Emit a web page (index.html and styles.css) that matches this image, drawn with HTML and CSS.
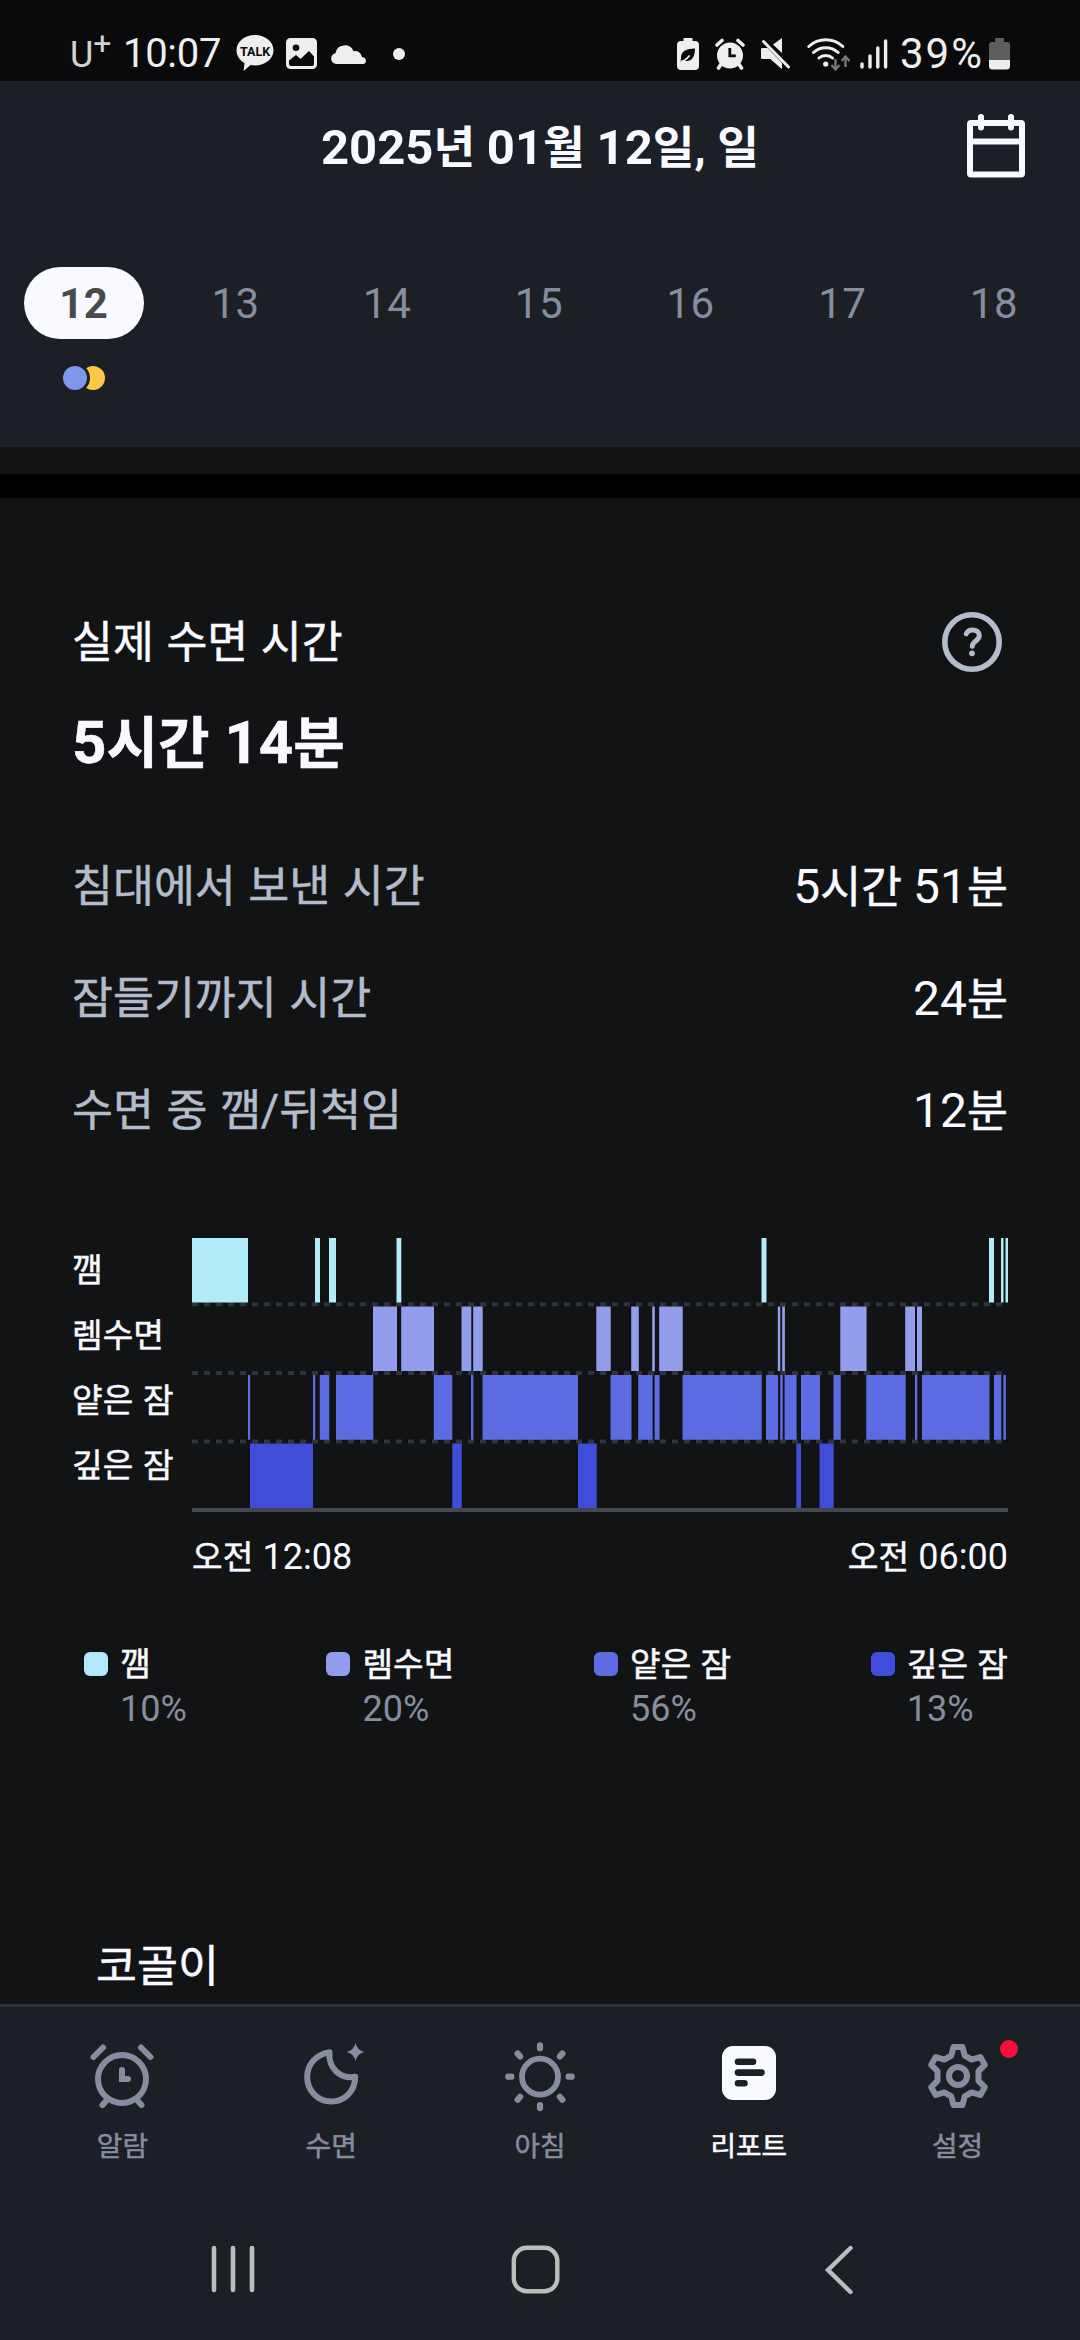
FILE: index.html
```html
<!DOCTYPE html>
<html lang="ko">
<head>
<meta charset="utf-8">
<title>수면 리포트</title>
<link rel="stylesheet" href="styles.css">
</head>
<body>
<div class="status">
  <div class="status-left">
    <span class="carrier">U<span class="plus">+</span></span>
    <span class="clock">10:07</span>
    <svg class="s-talk" width="38" height="37" viewBox="0 0 38 37"><path fill="#eee" d="M19 0C8.500 0 .5 6.800.5 15.300c0 5.500 3.300 10.200 8 12.900L7.600 36l6.900-5.900c1.500.3 3 .4 4.500.4 10.500 0 18.500-6.800 18.500-15.200S29.500 0 19 0z"/><text x="19" y="20.500" text-anchor="middle" class="talk">TALK</text></svg>
    <svg class="s-img" width="31" height="31" viewBox="0 0 31 31"><path fill="#eee" fill-rule="evenodd" d="M4.500 0h22A4.500 4.500 0 0 1 31 4.500v22a4.500 4.500 0 0 1-4.500 4.500h-22A4.500 4.500 0 0 1 0 26.500v-22A4.500 4.500 0 0 1 4.500 0zM10 6.500a3.300 3.300 0 1 0 0 6.600 3.300 3.300 0 0 0 0-6.600zM3 22.500V26q0 2 2 2h21q2 0 2-2v-7.500L23 13l-8.500 8-4.500-4z"/></svg>
    <svg class="s-cloud" width="37" height="20" viewBox="0 0 37 20"><path fill="#eee" d="M6 20a5.500 5.500 0 0 1-.6-10.800A9.500 9.500 0 0 1 23.500 7.200a7 7 0 0 1 8.500 6A3.500 3.500 0 0 1 33.500 20z"/></svg>
    <span class="s-dot"></span>
  </div>
  <div class="status-right">
    <svg width="22" height="32" viewBox="0 0 22 32"><path fill="#eee" d="M6.500 0h9v3H18a4 4 0 0 1 4 4v21a4 4 0 0 1-4 4H4a4 4 0 0 1-4-4V7a4 4 0 0 1 4-4h2.500z"/><path fill="#0a0a0c" d="M4 20c0-6 4-9.500 14-9.500 0 8-3 12.500-8 12.500-1.500 0-2.500-.3-3.500-1L3.500 24z"/><path d="M3.500 23.500q5-.5 9-6" stroke="#eee" stroke-width="1.600" fill="none"/></svg>
    <svg width="30" height="32" viewBox="0 0 30 32"><circle cx="15" cy="17.500" r="13" fill="#eee"/><path d="M2 7l5-4.500M28 7l-5-4.500M5.500 27l-2 3M24.500 27l2 3" stroke="#eee" stroke-width="3.600" stroke-linecap="round"/><path d="M14.800 10v7.800h6" fill="none" stroke="#0a0a0c" stroke-width="2.800"/></svg>
    <svg width="30" height="31" viewBox="0 0 30 31"><path fill="#eee" d="M0 12q0-2 2-2h5L21 24v7L9.500 21H2q-2 0-2-2zM12 6.500L21 0v15z"/><path d="M2.500 3.500L27 29" stroke="#0a0a0c" stroke-width="6"/><path fill="#eee" d="M0 12q0-2 2-2h4.500L21 25v6L9.500 21H2q-2 0-2-2z"/><path d="M2.500 3.500L27.500 29" stroke="#eee" stroke-width="3" stroke-linecap="round"/></svg>
    <svg width="43" height="34" viewBox="0 0 43 34"><g fill="none" stroke="#eee" stroke-width="3" stroke-linecap="round"><path d="M1.800 9.500a25 25 0 0 1 34 0M6.500 15.500a18 18 0 0 1 24.600 0M12 21a10 10 0 0 1 13.500 0"/></g><circle cx="18.700" cy="27" r="2.600" fill="#eee"/><path d="M28.500 22v10m-4-4l4 4.500 4-4.500M38.500 30V20m-4 4l4-4.500 4 4.500" fill="none" stroke="#777" stroke-width="2.400"/></svg>
    <svg width="28" height="30" viewBox="0 0 28 30"><path d="M2 25v3M10 17v11M17.800 9v19M25.600 2v26" stroke="#eee" stroke-width="3.400" stroke-linecap="round"/></svg>
    <span class="pct">39%</span>
    <svg width="21" height="32" viewBox="0 0 21 32"><path fill="#5e5e60" d="M6 0h9v4h3a3 3 0 0 1 3 3v15H0V7a3 3 0 0 1 3-3h3z"/><path fill="#eee" d="M0 22h21v6a3.500 3.500 0 0 1-3.500 3.500h-14A3.500 3.500 0 0 1 0 28z"/></svg>
  </div>
</div>

<header class="header">
  <div class="title-row">
    <span></span>
    <h1><b>2025</b>년 <b>01</b>월 <b>12</b>일, 일</h1>
    <svg class="calendar" width="58" height="64" viewBox="0 0 58 64" fill="none" stroke="#f8faff" stroke-width="6"><rect x="3" y="9" width="52" height="51.500" rx="1"/><path d="M3 27.500h52"/><path d="M14 3v10.500M44 3v10.500" stroke-linecap="round"/></svg>
  </div>
  <nav class="days">
    <div class="day selected"><span>12</span><i class="marks"><i class="sun-mark"></i><i class="moon-mark"></i></i></div>
    <div class="day"><span>13</span></div>
    <div class="day"><span>14</span></div>
    <div class="day"><span>15</span></div>
    <div class="day"><span>16</span></div>
    <div class="day"><span>17</span></div>
    <div class="day"><span>18</span></div>
  </nav>
</header>
<div class="divider"></div>

<main class="report">
  <div class="sleep-head">
    <h2>실제 수면 시간</h2>
    <svg width="60" height="60" viewBox="0 0 60 60" fill="none" stroke="#b4bbca"><circle cx="30" cy="30" r="27.200" stroke-width="5.600"/><path d="M24.300 21.800Q26 18 30.300 18c4.500 0 7 2.200 7 5.600 0 5.400-7 5.400-7 10.600" stroke-width="5" stroke-linecap="round"/><circle cx="30" cy="41.300" r="2.900" fill="#b4bbca" stroke="none"/></svg>
  </div>
  <p class="total"><b>5</b>시간 <b>14</b>분</p>
  <dl class="facts">
    <div><dt>침대에서 보낸 시간</dt><dd><b>5</b>시간 <b>51</b>분</dd></div>
    <div><dt>잠들기까지 시간</dt><dd><b>24</b>분</dd></div>
    <div><dt>수면 중 깸/뒤척임</dt><dd><b>12</b>분</dd></div>
  </dl>

  <section class="chart">
    <ul class="levels"><li>깸</li><li>렘수면</li><li>얕은 잠</li><li>깊은 잠</li></ul>
    <div class="plot">
      <svg width="816" height="274" viewBox="192 1238 816 274">
        <g stroke="#2f333c" stroke-width="4" stroke-dasharray="6 6"><path d="M192 1304.300h816M192 1373h816M192 1441.500h816"/></g>
        <path stroke="#444752" stroke-width="4" d="M192 1510h816"/>
        <path fill="#b2ecf8" d="M192 1238h56v64.500h-56zM315 1238h5v64.500h-5zM329 1238h7v64.500h-7zM396.500 1238h4.800v64.500h-4.800zM761.500 1238h5v64.500h-5zM989 1238h5v64.500h-5zM1001 1238h2.500v64.500h-2.500zM1005.500 1238h2.500v64.500h-2.500z"/>
        <path fill="#929dec" d="M373 1306.500h24v64.500h-24zM401.200 1306.500h32.800v64.500h-32.800zM461.500 1306.500h9.800v64.500h-9.800zM473.200 1306.500h9.500v64.500h-9.500zM596.300 1306.500h14.400v64.500h-14.400zM631.200 1306.500h7.600v64.500h-7.600zM652.200 1306.500h2.600v64.500h-2.600zM659.200 1306.500h23.500v64.500h-23.500zM777.800 1306.500h2.500v64.500h-2.500zM782.200 1306.500h2.700v64.500h-2.700zM840.300 1306.500h26.300v64.500h-26.300zM905.200 1306.500h9.800v64.500h-9.800zM917 1306.500h5v64.500h-5z"/>
        <path fill="#5d6ce2" d="M248 1375h2.200v64.700h-2.200zM313 1375h2.200v64.700h-2.200zM319.800 1375h9.400v64.700h-9.400zM336 1375h37.300v64.700h-37.300zM433.800 1375h18.500v64.700h-18.500zM471 1375h2.400v64.700h-2.400zM482.500 1375h95.500v64.700h-95.500zM610.500 1375h21v64.700h-21zM638.200 1375h14.400v64.700h-14.400zM654.600 1375h5v64.700h-5zM682.500 1375h79.200v64.700h-79.200zM766 1375h12v64.700h-12zM780.200 1375h2.500v64.700h-2.500zM784.600 1375h12v64.700h-12zM801 1375h19v64.700h-19zM833.500 1375h7.200v64.700h-7.200zM866.200 1375h39.500v64.700h-39.500zM915 1375h2.300v64.700h-2.300zM922 1375h67.500v64.700h-67.500zM994 1375h7.300v64.700h-7.300zM1003.400 1375h2.500v64.700h-2.500z"/>
        <path fill="#3f4dd8" d="M250 1443.500h63v64.500h-63zM452.300 1443.500h9.500v64.500h-9.500zM578 1443.500h18.700v64.500h-18.700zM796.300 1443.500h4.700v64.500h-4.700zM819.500 1443.500h14.200v64.500h-14.200z"/>
      </svg>
      <div class="times"><span>오전 <b>12:08</b></span><span>오전 <b>06:00</b></span></div>
    </div>
  </section>

  <ul class="legend">
    <li><i class="swatch awake"></i><div>깸<b>10%</b></div></li>
    <li><i class="swatch rem"></i><div>렘수면<b>20%</b></div></li>
    <li><i class="swatch light"></i><div>얕은 잠<b>56%</b></div></li>
    <li><i class="swatch deep"></i><div>깊은 잠<b>13%</b></div></li>
  </ul>
  <h3 class="snore">코골이</h3>
</main>

<nav class="tabs">
  <div class="tab"><svg viewBox="0 0 72 72" fill="none" stroke="#868d9e" stroke-width="6" stroke-linecap="round"><circle cx="36" cy="39" r="24"/><path d="M36 30v9h6M7.500 17l9.500-9.500M64.500 17L55 7.500M21 60l-4.500 5M51 60l4.500 5"/></svg>알람</div>
  <div class="tab"><svg viewBox="-3 0 72 72" fill="none" stroke="#868d9e" stroke-width="6" stroke-linejoin="round"><path d="M31.500 12.300C18 14.500 9.200 24.500 9.200 37c0 13.600 10.600 24.500 24 24.500 13.200 0 24-10.200 24-24.700C43 39 30 29 31.500 12.300z"/><path stroke="none" fill="#868d9e" d="M57.500 3q1.700 7.300 8.800 9-7.100 1.700-8.800 9-1.700-7.300-8.800-9 7.100-1.700 8.800-9z"/></svg>수면</div>
  <div class="tab"><svg viewBox="0 0 72 74" fill="none" stroke="#868d9e" stroke-width="6.400" stroke-linecap="round"><circle cx="36" cy="37.700" r="18.500" stroke-width="6"/><path d="M36 5.400v3M36 67v3M3.400 37.700h3.200M65.400 37.700h3.200M13 14l2.600 3M59 14l-2.600 3M13 61.400l2.600-3M59 61.400l-2.600-3"/></svg>아침</div>
  <div class="tab active"><svg viewBox="0 0 72 72"><rect x="9" y="6" width="54" height="54" rx="11" fill="#f8faff"/><path d="M25 21.800h15M25 32.600h23.500M25 43.300h6.500" stroke="#1d1f27" stroke-width="6.600" stroke-linecap="round"/></svg>리포트</div>
  <div class="tab"><svg viewBox="0 0 72 72" fill="none" stroke="#868d9e" stroke-width="6" stroke-linejoin="round"><circle cx="36" cy="36" r="9"/><path d="M31.500 7h9l2.200 8.600 7 4 8.600-2.600 4.500 7.800-6.300 6.400v9.600l6.300 6.400-4.500 7.800-8.600-2.600-7 4L40.500 65h-9l-2.200-8.600-7-4-8.600 2.600-4.500-7.800 6.300-6.400v-9.600l-6.300-6.400 4.500-7.800 8.600 2.600 7-4z"/></svg>설정<i class="badge"></i></div>
</nav>

<footer class="sysnav">
  <svg viewBox="0 0 60 60"><path d="M11 8v42M30 8v42M49 8v42" stroke="#bdbdbd" stroke-width="4.600" stroke-linecap="round"/></svg>
  <svg viewBox="0 0 60 60"><rect x="7.800" y="7.800" width="43.500" height="43.500" rx="13" fill="none" stroke="#bdbdbd" stroke-width="4.400"/></svg>
  <svg viewBox="0 0 60 60"><path d="M41.500 8L19 30l22.500 22" fill="none" stroke="#bdbdbd" stroke-width="4.400" stroke-linecap="round"/></svg>
</footer>
</body>
</html>
```
FILE: styles.css
```css
* { box-sizing: border-box; margin: 0; padding: 0; }
body {
  width: 1080px; height: 2340px; overflow: hidden;
  display: flex; flex-direction: column;
  background: #121315; color: #f8faff;
  font-family: Roboto, "Noto Sans CJK KR", sans-serif;
}
ul { list-style: none; }
svg { display: block; flex: none; }
b { font-weight: inherit; -webkit-text-stroke: 0; }
i { font-style: normal; }

.status { height: 81px; background: #0a0a0c; display: flex; justify-content: space-between; padding: 32px 70px 0 70px; color: #eee; }
.status-left, .status-right { display: flex; align-items: center; height: 43px; }
.carrier { display: flex; width: 53px; font: 400 36px/40px Roboto, sans-serif; padding-top: 3px; color: #d2d2d2; }
.plus { font-size: 32px; line-height: 16px; }
.clock { width: 113px; font-size: 40px; font-weight: 400; letter-spacing: -0.3px; }
.s-talk { margin-right: 12px; }
.s-img { margin-right: 13px; }
.s-cloud { margin-right: 26px; }
.s-dot { width: 12px; height: 12px; border-radius: 50%; background: #eee; }
.talk { font: 700 12.5px Roboto, sans-serif; fill: #0a0a0c; }
.status-right { gap: 16px; }
.status-right svg:nth-of-type(5) { margin-left: -6px; }
.pct { font-size: 42px; letter-spacing: 2px; margin: 0 -11px 0 -4px; }

.header { height: 366px; background: #1d1f27; display: flex; flex-direction: column; }
.title-row { height: 130px; display: grid; grid-template-columns: 200px 1fr 200px; align-items: center; }
h1 { text-align: center; font-size: 45.300px; font-weight: 700; line-height: 60px; white-space: nowrap; word-spacing: 0.500px; padding-top: 4px; }
h1 b { font-size: 49px; }
.calendar { justify-self: end; margin-right: 55px; }
.days { display: flex; padding: 56px 0 0 8px; }
.day { flex: 0 0 151.700px; display: flex; flex-direction: column; align-items: center; gap: 27px; color: #868d9e; font-size: 42px; letter-spacing: .5px; }
.day span { width: 120px; height: 72px; line-height: 74px; text-align: center; }
.selected span { background: #f8faff; border-radius: 36px; color: #4a4a4a; font-weight: 700; }
.marks { display: flex; flex-direction: row-reverse; }
.sun-mark, .moon-mark { width: 24px; height: 24px; border-radius: 50%; background: #ffc844; }
.moon-mark { background: #8095ec; margin-right: -6px; box-shadow: 0 0 0 3px #1d1f27; position: relative; }
.divider { height: 24px; margin-top: 27px; background: #000; flex: none; }

/* Hangul is thickened slightly so it sits at the same weight as the Roboto digits */
.report, .tab { -webkit-text-stroke: 0.5px currentColor; }
.report { height: 1506px; padding: 114px 72px 0; overflow: hidden; }
.sleep-head { display: flex; justify-content: space-between; align-items: center; height: 60px; padding-right: 6px; }
h2 { font-size: 44.500px; font-weight: 400; line-height: 60px; word-spacing: 1.5px; padding-top: 2px; }
.total { font-size: 56px; line-height: 80px; height: 80px; font-weight: 700; margin-top: 31px; word-spacing: 1px; }
.total b { font-size: 60px; -webkit-text-stroke: 0.5px currentColor; }
.facts { margin-top: 48px; }
.facts div { height: 112px; display: flex; justify-content: space-between; align-items: center; font-size: 44.500px; line-height: 60px; }
.facts dt { color: #b4bbca; word-spacing: 1.5px; }
.facts dd b { font-size: 48px; }
.chart { display: flex; margin-top: 71px; height: 350px; }
.levels { width: 120px; font-size: 33.300px; line-height: 65px; word-spacing: 1.5px; }
.times { display: flex; justify-content: space-between; font-size: 33.300px; line-height: 48px; margin-top: 21px; word-spacing: 1px; }
.times b { font-size: 36px; }
.legend { display: flex; justify-content: space-between; margin-top: 53px; padding-left: 12px; }
.legend li { display: flex; gap: 12px; font-size: 33.300px; line-height: 48px; word-spacing: 1px; }
.legend b { display: block; font-size: 36px; line-height: 41px; color: #868d9e; }
.swatch { width: 24px; height: 24px; border-radius: 6px; margin-top: 11px; }
.awake { background: #b2ecf8; }
.rem { background: #929dec; }
.light { background: #5d6ce2; }
.deep { background: #3f4dd8; }
.snore { font-size: 44.500px; line-height: 60px; font-weight: 400; margin: 207px 0 0 24px; }

.tabs { height: 201px; flex: none; background: #1d1f27; border-top: 3px solid #2e313d; display: flex; padding: 33px 18px 0; }
.tab { flex: 1; position: relative; display: flex; flex-direction: column; align-items: center; gap: 15px; font-size: 27.800px; line-height: 40px; color: #868d9e; }
.tab svg { width: 72px; height: 72px; }
.active { color: #f8faff; }
.badge { position: absolute; top: 0; left: 147px; width: 18px; height: 18px; border-radius: 50%; background: #f7113a; }
.sysnav { flex: 1; background: #1d1f27; display: flex; justify-content: space-around; padding: 35px 90px 0 81px; }
.sysnav svg { width: 60px; height: 60px; }
```
